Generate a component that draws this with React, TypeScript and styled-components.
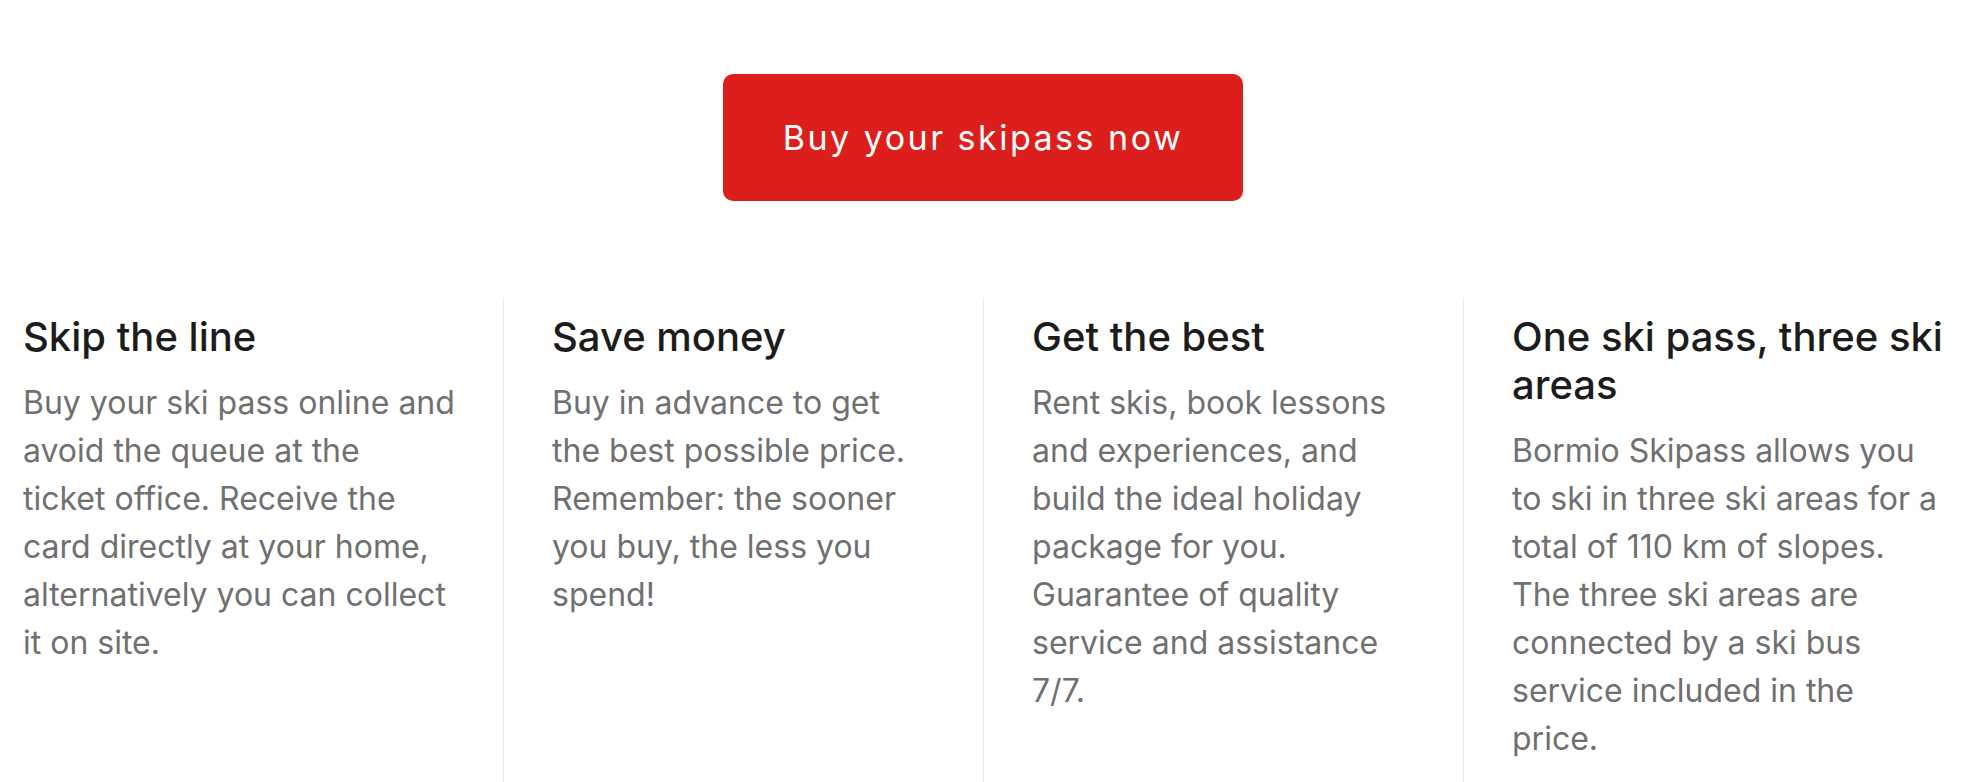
import React from "react";
import styled, { createGlobalStyle } from "styled-components";

const GlobalStyle = createGlobalStyle`
  html, body {
    margin: 0;
    padding: 0;
    background: #ffffff;
  }
  body {
    font-family: Inter, "Noto Sans", "Liberation Sans", sans-serif;
    -webkit-font-smoothing: antialiased;
  }
`;

const Section = styled("section")`
  display: flex;
  flex-direction: column;
  align-items: center;
  padding: 74px 0 0 23px;
  width: 1920px;
`;

const BuyButton = styled("a")`
  display: inline-flex;
  align-items: center;
  justify-content: center;
  box-sizing: border-box;
  height: 127px;
  padding: 0 60px;
  background: #dc1f1c;
  border-radius: 10px;
  color: #ffffff;
  font-size: 34px;
  font-weight: 400;
  letter-spacing: 2.5px;
  text-decoration: none;
  cursor: pointer;
`;

const Features = styled("div")`
  display: grid;
  grid-template-columns: repeat(4, 480px);
  margin-top: 97px;
  width: 100%;
`;

const Feature = styled("article")`
  box-sizing: border-box;
  padding: 15px 48px 48px;
  min-height: 420px;

  & + & {
    border-left: 1px solid #ebebeb;
  }
  &:first-child {
    padding-left: 0;
  }
  &:last-child {
    padding-right: 0;
  }
`;

const Title = styled("h3")`
  margin: 0 0 18px;
  font-size: 40px;
  line-height: 48px;
  font-weight: 500;
  color: #1c1c1c;
`;

const Text = styled("p")`
  margin: 0;
  font-size: 32px;
  line-height: 48px;
  font-weight: 400;
  color: #707070;
  white-space: pre-line;
`;

type FeatureItem = { title: string; text: string };

const features: FeatureItem[] = [
  {
    title: "Skip the line",
    text: "Buy your ski pass online and avoid the queue at the\nticket office. Receive the card directly at your home, alternatively you can collect it on site.",
  },
  {
    title: "Save money",
    text: "Buy in advance to get the best possible price. Remember: the sooner you buy, the less you spend!",
  },
  {
    title: "Get the best",
    text: "Rent skis, book lessons and experiences, and build the ideal holiday package for you. Guarantee of quality service and assistance 7/7.",
  },
  {
    title: "One ski pass, three ski areas",
    text: "Bormio Skipass allows you to ski in three ski areas for a total of 110 km of slopes. The three ski areas are connected by a ski bus service included in the price.",
  },
];

export default function App() {
  return (
    <>
      <GlobalStyle />
      <Section>
        <BuyButton href="#">Buy your skipass now</BuyButton>
        <Features>
          {features.map((f) => (
            <Feature key={f.title}>
              <Title>{f.title}</Title>
              <Text>{f.text}</Text>
            </Feature>
          ))}
        </Features>
      </Section>
    </>
  );
}
